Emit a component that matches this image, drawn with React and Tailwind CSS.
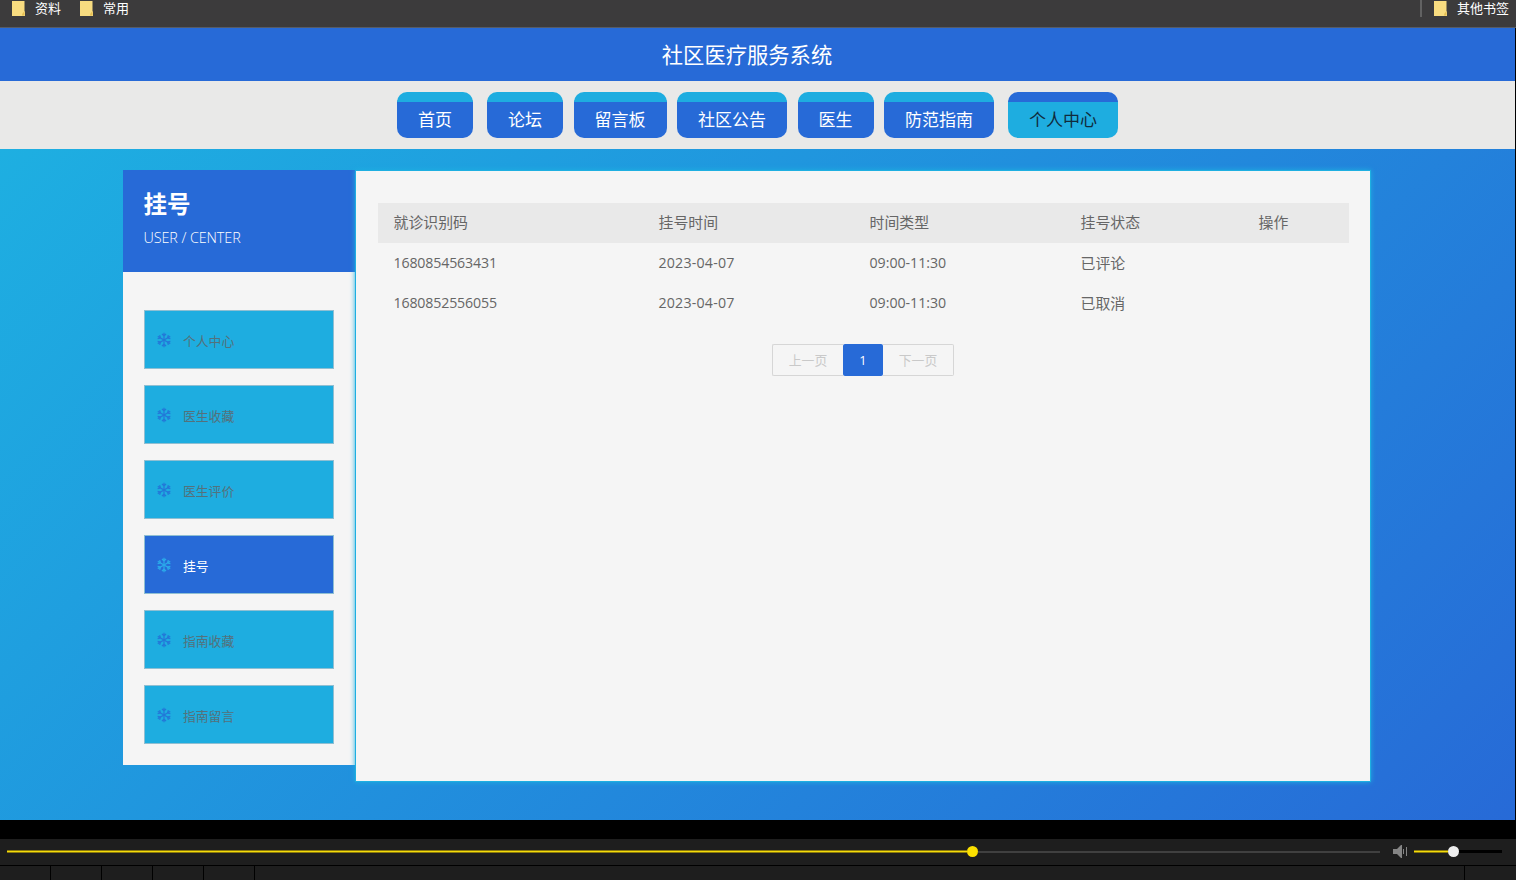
import React from 'react';

const navItems = [
  { label: '首页', className: 'w-[76px] ml-0' },
  { label: '论坛', className: 'w-[76px] ml-[14px]' },
  { label: '留言板', className: 'w-[93px] ml-[10.5px]' },
  { label: '社区公告', className: 'w-[110px] ml-[10.5px]' },
  { label: '医生', className: 'w-[76px] ml-[10.5px]' },
  { label: '防范指南', className: 'w-[110px] ml-[10.5px]' },
  { label: '个人中心', className: 'w-[110px] ml-[14px]', active: true },
];

const menuItems = ['个人中心', '医生收藏', '医生评价', '挂号', '指南收藏', '指南留言'];

const columns = ['就诊识别码', '挂号时间', '时间类型', '挂号状态', '操作'];

const rows = [
  ['1680854563431', '2023-04-07', '09:00-11:30', '已评论', ''],
  ['1680852556055', '2023-04-07', '09:00-11:30', '已取消', ''],
];

const cellStyles = [
  'text-[14.2px] tracking-[-0.16px]',
  'text-[14.2px] tracking-[0.2px]',
  'text-[14.2px] tracking-[-0.02px]',
  'text-[14.9px]',
  'text-[14.9px]',
];

const BookmarkIcon = () => (
  <svg width="13" height="16" viewBox="0 0 13 16" className="shrink-0">
    <path d="M0 1h12.5v10.5h.5V16H0z" fill="#f8dc80" />
    <path d="M10 15.5c0-2 1-3 2.5-4V15.5z" fill="#e3bd52" />
  </svg>
);

const Snowflake = () => (
  <svg
    width="14"
    height="16"
    viewBox="0 0 14 16"
    fill="none"
    stroke="currentColor"
    strokeWidth="1.25"
    className="shrink-0"
  >
    {[0, 60, 120, 180, 240, 300].map((angle) => (
      <path key={angle} transform={`rotate(${angle} 7 8)`} d="M7 8V.8M5 1.8 7 4 9 1.8" />
    ))}
  </svg>
);

const BookmarkBar = () => (
  <div className="flex h-7 items-start border-b border-[#575c66] bg-[#3c3b3c] pl-3 text-[13px] leading-[17px] text-white">
    <BookmarkIcon />
    <span className="ml-[10px]">资料</span>
    <div className="ml-[19px] flex">
      <BookmarkIcon />
      <span className="ml-[10px]">常用</span>
    </div>
    <div className="mr-[7px] ml-auto flex">
      <div className="mr-3 h-[17px] w-[2px] bg-[#626262]" />
      <BookmarkIcon />
      <span className="ml-[10px]">其他书签</span>
    </div>
  </div>
);

const Sidebar = () => (
  <aside className="h-[595px] w-[232px] shrink-0 bg-[#f5f5f5]">
    <div className="h-[102px] bg-[#276ad7] pt-[17px] pl-[20.5px] text-white">
      <h2 className="text-[23.5px] leading-[34px] font-bold">挂号</h2>
      <p className="pt-[7px] text-[14.4px] leading-5 font-light tracking-[-0.1px] text-white">USER / CENTER</p>
    </div>
    <ul className="space-y-4 px-[21px] pt-[38px]">
      {menuItems.map((item) => (
        <li
          key={item}
          className={`flex h-[59px] items-center border border-[#8fbfd2] pl-3 text-[12.8px] ${
            item === '挂号' ? 'bg-[#276ad7] text-white' : 'bg-[#1eade0] text-[#54717b]'
          }`}
        >
          <span className={item === '挂号' ? 'text-[#2ba9ea]' : 'text-[#2378d8]'}>
            <Snowflake />
          </span>
          <span className="pt-1 pl-3">{item}</span>
        </li>
      ))}
    </ul>
  </aside>
);

const Records = () => (
  <main className="h-[612px] w-[1016px] shrink-0 border border-[#1eafe1] bg-[#f5f5f5] pt-8 pr-[21px] pl-[22px] shadow-[0_0_5px_#1eafe1]">
    <table className="w-[971px] table-fixed text-left text-[#666]">
      <colgroup>
        <col className="w-[265px]" />
        <col className="w-[211px]" />
        <col className="w-[211px]" />
        <col className="w-[178px]" />
        <col className="w-[106px]" />
      </colgroup>
      <thead>
        <tr className="h-10 bg-[#e9e9e9]">
          {columns.map((column) => (
            <th key={column} className="p-0 pb-[2px] pl-[15.5px] text-[14.9px] font-normal">{column}</th>
          ))}
        </tr>
      </thead>
      <tbody>
        {rows.map((row) => (
          <tr key={row[0]} className="h-10">
            {row.map((cell, index) => (
              <td key={index} className={`p-0 pl-[15.5px] ${cellStyles[index]}`}>
                {cell}
              </td>
            ))}
          </tr>
        ))}
      </tbody>
    </table>
    {/* Pagination */}
    <div className="mt-[21px] flex w-[970px] justify-center text-[12.8px] text-[#c9c9c9]">
      <span className="flex h-8 w-[71px] items-center justify-center rounded-l-[2px] border border-r-0 border-[#d6d6d6] pt-px">上一页</span>
      <span className="flex h-8 w-10 items-center justify-center rounded-[2px] bg-[#276ad7] pt-px text-white">1</span>
      <span className="flex h-8 w-[71px] items-center justify-center rounded-r-[2px] border border-l-0 border-[#d6d6d6] pt-px">下一页</span>
    </div>
  </main>
);

const PlayerBar = () => (
  <footer className="border-t-[19px] border-black bg-[#1e1e1e]">
    <div className="flex h-[27px] items-center border-b border-black pb-px pl-[7px]">
      <div className="h-[3px] w-[960px] border-y border-[#8b7a0c] bg-[#f5dc0a]" />
      <div className="h-[11px] w-[11px] rounded-full bg-[#fbe000]" />
      <div className="h-[2px] w-[402px] bg-[#404040]" />
      <svg width="15" height="13" viewBox="0 0 15 13" className="ml-[13px]" fill="#858585">
        <path d="M0 4h4l4-4h1v13H8L4 9H0z" />
        <path d="M10 4h1v5h-1zM13 2h1v9h-1z" />
      </svg>
      <div className="ml-[6px] h-[3px] w-[34px] border-y border-[#8b7a0c] bg-[#f5dc0a]" />
      <div className="h-[11px] w-[11px] rounded-full bg-[#eee]" />
      <div className="h-[3px] w-[43px] bg-black" />
    </div>
    <div className="flex h-[14px]">
      {[0, 1, 2, 3, 4].map((slot) => (
        <div key={slot} className="w-[51px] border-r border-black" />
      ))}
      <div className="w-[1210px] border-r border-black" />
    </div>
  </footer>
);

export default function App() {
  return (
    <div className="h-[880px] w-[1516px] overflow-hidden bg-black font-['Open_Sans','Noto_Sans_CJK_SC',sans-serif]">
      <BookmarkBar />
      <div className="mr-px">
        <header className="flex h-[53px] items-center justify-center bg-[#276ad7] pr-[21px] text-[21.3px] text-white">
          社区医疗服务系统
        </header>
        <nav className="flex h-[68px] justify-center bg-[#e9e9e8] pt-[11px]">
          {navItems.map((item) => (
            <div
              key={item.label}
              className={`flex h-[46px] items-center justify-center rounded-[10px] border-t-[10px] text-[17px] ${item.className} ${
                item.active
                  ? 'border-[#276ad7] bg-[#1eade0] text-[#102b3c]'
                  : 'border-[#1eade0] bg-[#276ad7] text-white'
              }`}
            >
              {item.label}
            </div>
          ))}
        </nav>
        <div className="flex h-[671px] items-start bg-linear-135 from-[#1eafe1] to-[#276ad7] pt-[21px] pl-[123px]">
          <Sidebar />
          <Records />
        </div>
      </div>
      <PlayerBar />
    </div>
  );
}
